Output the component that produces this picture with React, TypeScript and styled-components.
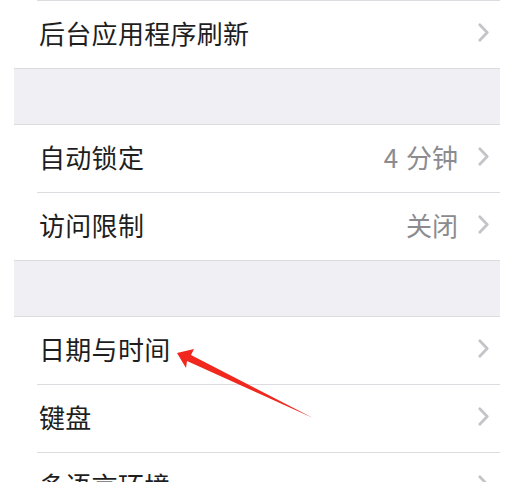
import React from "react";
import styled, { createGlobalStyle } from "styled-components";

const Global = createGlobalStyle`
  html, body {
    margin: 0;
    padding: 0;
    background: #ffffff;
  }
  body {
    font-family: "Noto Sans CJK SC", "Noto Sans", sans-serif;
    -webkit-font-smoothing: antialiased;
  }
`;

const Page = styled.div`
  position: relative;
  width: 507px;
  height: 482px;
  overflow: hidden;
  background: #ffffff;
  padding: 0 7px 0 14px;
  box-sizing: border-box;
`;

const List = styled.div`
  display: flex;
  flex-direction: column;
`;

const Group = styled.div`
  display: flex;
  flex-direction: column;
  background: #ffffff;
`;

const Spacer = styled.div`
  height: 55px;
  background: #efeff4;
  border-top: 1px solid #dcdce0;
  border-bottom: 1px solid #dcdce0;
`;

/* 67px tall rows: 63px content + 4px bottom padding to lift the text a little */
const Row = styled.div<{ $topLine?: boolean; $last?: boolean }>`
  position: relative;
  height: 63px;
  display: flex;
  align-items: center;
  padding: 0 11px 4px 25px;
  border-top: ${(p) => (p.$topLine ? "1px solid transparent" : "0")};
  margin-bottom: ${(p) => (p.$last ? "0" : "1px")};

  &::after {
    content: "";
    display: ${(p) => (p.$last ? "none" : "block")};
    position: absolute;
    left: 23px;
    right: 0;
    bottom: -1px;
    height: 1px;
    background: #dcdce0;
  }

  &::before {
    content: "";
    display: ${(p) => (p.$topLine ? "block" : "none")};
    position: absolute;
    left: 23px;
    right: 0;
    top: -1px;
    height: 1px;
    background: #dcdce0;
  }
`;

const Label = styled.span`
  flex: 1;
  font-size: 26px;
  color: #1e1e1e;
  letter-spacing: 0.3px;
  white-space: nowrap;
`;

const Value = styled.span`
  font-size: 26px;
  color: #8b8b90;
  margin-right: 20px;
  white-space: nowrap;
  word-spacing: 2px;
`;

const Chevron = () => (
  <svg width="11" height="19" viewBox="0 0 11 19" aria-hidden="true">
    <polyline
      points="1.8,1.8 9.2,9.5 1.8,17.2"
      fill="none"
      stroke="#c4c4c9"
      strokeWidth="2.8"
      strokeLinecap="round"
      strokeLinejoin="round"
    />
  </svg>
);

const ArrowLayer = styled.svg`
  position: absolute;
  left: 0;
  top: 0;
  pointer-events: none;
`;

type Item = { label: string; value?: string };

const Cell = ({ item, topLine, last }: { item: Item; topLine?: boolean; last?: boolean }) => (
  <Row $topLine={topLine} $last={last}>
    <Label>{item.label}</Label>
    {item.value && <Value>{item.value}</Value>}
    <Chevron />
  </Row>
);

export default function App() {
  return (
    <>
      <Global />
      <Page>
        <List>
          <Group>
            <Cell item={{ label: "后台应用程序刷新" }} topLine last />
          </Group>
          <Spacer />
          <Group>
            <Cell item={{ label: "自动锁定", value: "4 分钟" }} />
            <Cell item={{ label: "访问限制", value: "关闭" }} last />
          </Group>
          <Spacer />
          <Group>
            <Cell item={{ label: "日期与时间" }} />
            <Cell item={{ label: "键盘" }} />
            <Cell item={{ label: "多语言环境" }} last />
          </Group>
        </List>
        <ArrowLayer width="507" height="482" viewBox="0 0 507 482">
          <polygon
            points="177,353 194,349 191,355 313,418 187,361 186,368"
            fill="#f0281e"
          />
        </ArrowLayer>
      </Page>
    </>
  );
}
